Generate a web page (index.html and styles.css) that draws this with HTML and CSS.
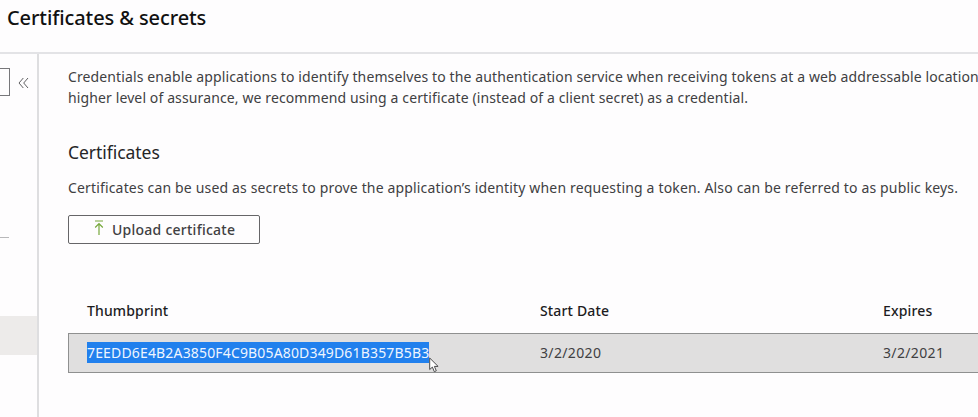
FILE: index.html
```html
<!DOCTYPE html>
<html lang="en">
<head>
<meta charset="utf-8">
<title>Certificates &amp; secrets</title>
<link rel="stylesheet" href="styles.css">
</head>
<body>
<header class="page-header"><h1 class="page-title"><span>Certificates &amp; secrets</span></h1></header>
<div class="layout">
  <aside class="sidebar">
    <div class="search-row">
      <div class="search-box"></div>
      <svg class="collapse" width="11" height="12" viewBox="0 0 11 12"><path d="M5.3 1 1 6l4.3 5M10 1 5.7 6 10 11"/></svg>
    </div>
    <div class="nav-divider"></div>
    <div class="nav-selected"></div>
  </aside>
  <main class="content">
    <p class="intro"><span class="line-one">Credentials enable applications to identify themselves to the authentication service when receiving tokens at a web addressable location</span><br><span class="line-two">higher level of assurance, we recommend using a certificate (instead of a client secret) as a credential.</span></p>
    <h2 class="section-title"><span>Certificates</span></h2>
    <p class="section-text"><span>Certificates can be used as secrets to prove the application’s identity when requesting a token. Also can be referred to as public keys.</span></p>
    <button class="upload" type="button">
      <svg width="10" height="16" viewBox="0 0 10 16"><path d="M1 1h8M5 15V3.5M1.2 7.5 5 3.5l3.8 4"/></svg>
      <span>Upload certificate</span>
    </button>
    <div class="table">
      <div class="row head"><span>Thumbprint</span><span>Start Date</span><span>Expires</span></div>
      <div class="row body">
        <div class="thumb-cell"><span class="thumbprint">7EEDD6E4B2A3850F4C9B05A80D349D61B357B5B3</span>
          <svg class="cursor" width="11" height="16" viewBox="0 0 11 16"><path d="M.7 1v11.5l2.7-2.4 1.9 4.6 2-.9-1.9-4.4h3.7z"/></svg>
        </div>
        <span class="date">3/2/2020</span><span class="date">3/2/2021</span>
      </div>
    </div>
  </main>
</div>
</body>
</html>
```
FILE: styles.css
```css
* { box-sizing: border-box; }
body {
  margin: 0;
  height: 417px;
  overflow: hidden;
  background: #fefdfe;
  color: #404042;
  font: 14px/21px "Noto Sans", "Open Sans", sans-serif;
  white-space: nowrap;
}
h1, h2, p { margin: 0; }
.page-header { height: 54px; padding: 4px 0 0 7px; border-bottom: 2px solid #e3e3e6; }
.page-title { font-size: 20px; line-height: 27px; font-weight: 500; color: #111; letter-spacing: -0.1px; }
.layout { display: flex; height: 363px; }
.sidebar { flex: none; width: 39px; border-right: 2px solid #dedee0; }
.search-row { display: flex; align-items: center; gap: 9px; padding-top: 14px; }
.search-box { width: 10px; height: 28px; border: 1px solid #77777a; border-left: 0; }
.collapse { fill: none; stroke: #606062; stroke-width: 1; margin: 2px 0 0 -1px; }
.nav-divider { width: 9px; height: 1px; margin-top: 141px; background: #b8b8ba; }
.nav-selected { height: 39px; margin-top: 78px; background: #edebea; }
.content { flex: 1; min-width: 0; padding: 12px 0 0 29px; }
.intro { letter-spacing: 0.118px; }
.section-title { margin-top: 31px; font-size: 17.5px; line-height: 26px; font-weight: 400; color: #252527; letter-spacing: -0.05px; }
.section-text { margin-top: 12px; letter-spacing: 0.16px; }
.upload {
  display: flex;
  align-items: center;
  gap: 8px;
  width: 192px;
  height: 29px;
  margin-top: 17px;
  padding: 0 0 0 25px;
  border: 1px solid #666668;
  border-radius: 2px;
  background: #fefdfe;
  color: #404042;
  font: 500 14px/20px "Noto Sans", "Open Sans", sans-serif;
  letter-spacing: 0.25px;
}
.upload svg { fill: none; stroke: #76a83b; stroke-width: 1.2; margin-bottom: 3px; }
.table { margin-top: 56px; }
.row { display: grid; grid-template-columns: 453px 343px 1fr; align-items: center; padding-left: 18px; }
.head { height: 33px; padding-left: 19px; padding-bottom: 12px; font-weight: 500; color: #1c1c1e; letter-spacing: 0.15px; }
.body { height: 40px; padding-bottom: 2px; border: 1px solid #8f9090; border-right: 0; background: #e0dfdf; }
.thumb-cell { position: relative; display: flex; }
.thumbprint { background: #2180ed; color: #eef5ff; letter-spacing: 0.16px; }
.date { letter-spacing: 0.35px; }
.cursor { position: absolute; left: 342px; top: 15px; fill: #fff; stroke: #4a4a4c; }
```
